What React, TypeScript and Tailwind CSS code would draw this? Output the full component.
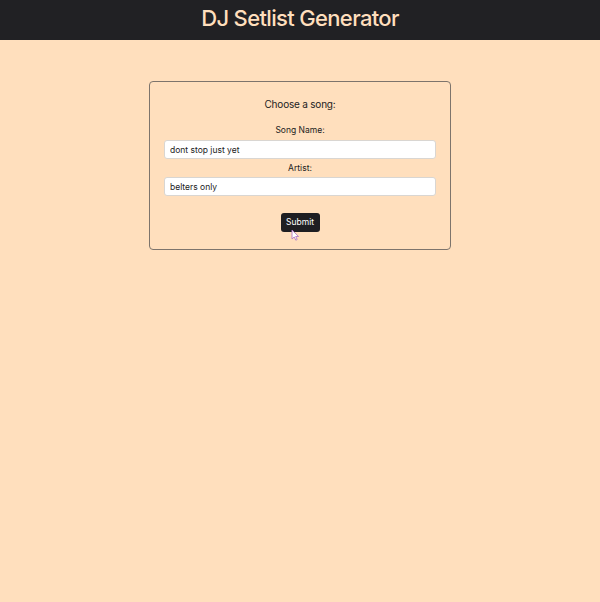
export default function App() {
  return (
    <div className="min-h-[602px] bg-[#ffdfbd] font-['Inter',sans-serif] text-[#222222]">
      <header className="flex h-10 items-center justify-center bg-[#212124] pb-1">
        <h1 className="text-[22px] font-medium leading-none tracking-[-0.03em] text-[#ffdfbd]">DJ Setlist Generator</h1>
      </header>

      <main className="flex justify-center pt-[41px]">
        <form className="relative flex w-[302px] flex-col items-center rounded-[4px] border border-[#7d746c] px-[14px] pb-[17px] pt-[15px]">
          <div className="text-[10px] leading-[14px] tracking-[-0.02em]">Choose a song:</div>

          <label className="mt-[13px] text-[8.5px] leading-[12px]">Song Name:</label>
          <input
            className="mt-[4px] h-[19px] w-full rounded-[3px] border border-[#d9d6d2] bg-white px-[5px] text-[8.5px] text-[#222222] outline-none"
            defaultValue="dont stop just yet"
          />
          <label className="mt-[3px] text-[8.5px] leading-[12px]">Artist:</label>
          <input
            className="mt-[3px] h-[19px] w-full rounded-[3px] border border-[#d9d6d2] bg-white px-[5px] text-[8.5px] text-[#222222] outline-none"
            defaultValue="belters only"
          />

          <button
            type="button"
            className="mt-[17px] h-[19px] w-[39px] rounded-[3px] bg-[#1e1e22] text-[8.5px] leading-none text-white"
          >
            Submit
          </button>

          <svg
            className="absolute left-[141px] top-[147px]"
            width="9"
            height="12"
            viewBox="0 0 9 12"
          >
            <path d="M1 1 L1 10 L3.2 8 L4.8 11.2 L6.2 10.5 L4.7 7.5 L7.6 7.5 Z" fill="#ffffff" stroke="#b27cc4" strokeWidth="0.9" />
          </svg>
        </form>
      </main>
    </div>
  );
}
